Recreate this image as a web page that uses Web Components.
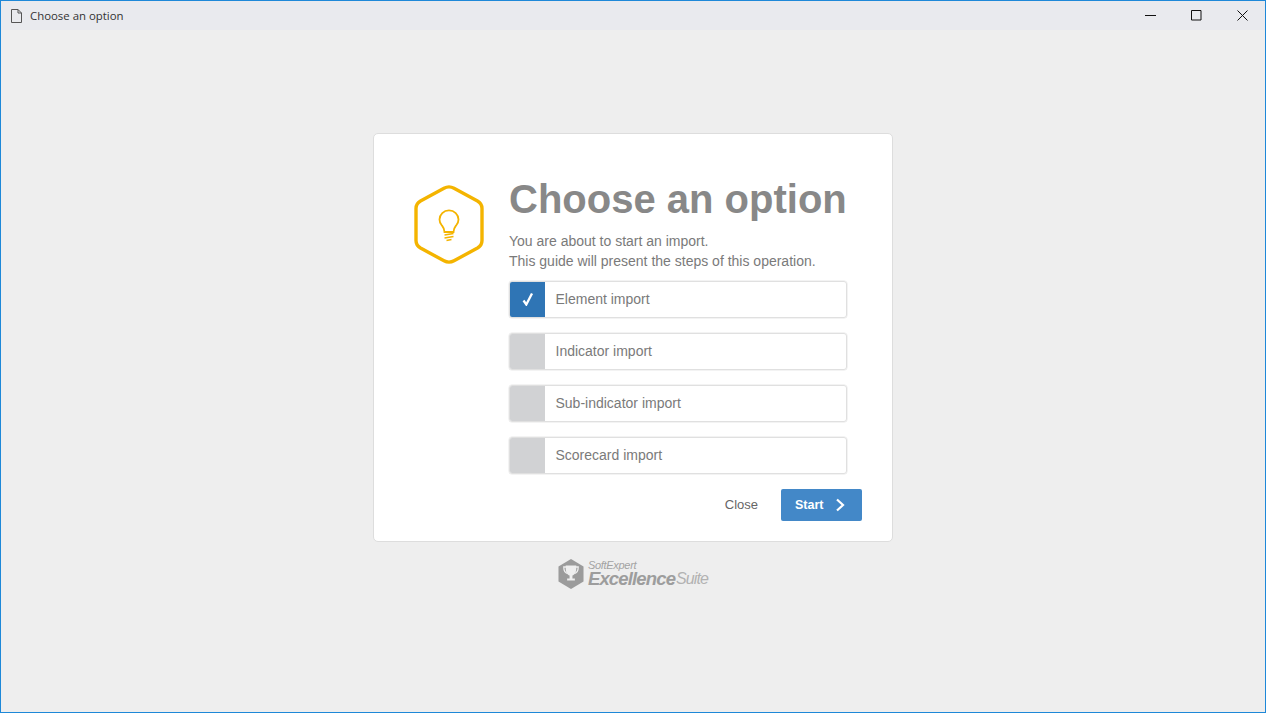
<!DOCTYPE html>
<html lang="en">
<head>
<meta charset="utf-8">
<title>Choose an option</title>
<style>
  html, body { margin: 0; height: 100%; }
  body { font-family: "Liberation Sans", Arial, sans-serif; }
</style>
</head>
<body>
<app-window caption="Choose an option">
  <wizard-card heading="Choose an option">
    <span slot="intro">You are about to start an import.<br>This guide will present the steps of this operation.</span>
    <option-row checked>Element import</option-row>
    <option-row>Indicator import</option-row>
    <option-row>Sub-indicator import</option-row>
    <option-row>Scorecard import</option-row>
  </wizard-card>
  <brand-logo></brand-logo>
</app-window>

<script>
class AppWindow extends HTMLElement {
  constructor() {
    super();
    this.attachShadow({ mode: "open" });
  }

  connectedCallback() {
    this.shadowRoot.innerHTML = /* html */`
    <style>
      :host {
        display: flex;
        flex-direction: column;
        box-sizing: border-box;
        height: 713px;
        border: 1px solid #1e88d8;
        background: #eeeeee;
      }
      .bar {
        display: flex;
        align-items: center;
        flex: none;
        height: 29px;
        padding-left: 10px;
        background: #e9eaee;
        font: 11.4px "Open Sans", "Noto Sans", sans-serif;
        color: #333;
      }
      .caption { margin-left: 8px; flex: 1; }
      .ctl { display: flex; width: 46px; height: 29px; align-items: center; justify-content: center; }
      .ctl svg { display: block; }
      main {
        flex: 1;
        display: flex;
        flex-direction: column;
        align-items: center;
        padding-top: 103px;
      }
    </style>
    <div class="bar">
      <svg width="11" height="14" viewBox="0 0 11 14" fill="none" stroke="#555" stroke-width="1">
        <path d="M.5 .5h6.5l3.5 3.5v9.500h-10z"/><path d="M7 .5v3.500h3.500"/>
      </svg>
      <span class="caption">${this.getAttribute("caption")}</span>
      <span class="ctl"><svg width="11" height="11" viewBox="0 0 11 11"><path d="M0 5.5h11" stroke="#111" fill="none"/></svg></span>
      <span class="ctl"><svg width="11" height="11" viewBox="0 0 11 11"><path d="M.5 .5h9.500v9.500h-9.500z" stroke="#111" fill="none"/></svg></span>
      <span class="ctl"><svg width="11" height="11" viewBox="0 0 11 11"><path d="M.5 .5l10 10M10.5 .5l-10 10" stroke="#111" fill="none"/></svg></span>
    </div>
    <main><slot></slot></main>`;
  }
}

class WizardCard extends HTMLElement {
  constructor() {
    super();
    this.attachShadow({ mode: "open" });
  }

  connectedCallback() {
    this.shadowRoot.innerHTML = /* html */`
    <style>
      :host {
        display: block;
        box-sizing: border-box;
        width: 520px;
        height: 409px;
        padding: 43px 30px 20px 40px;
        background: #fff;
        border: 1px solid #dddddd;
        border-radius: 5px;
      }
      .top { display: flex; }
      .mark { flex: none; width: 72px; height: 80px; margin: 8px 23px 0 0; }
      .mark svg { display: block; }
      .body { width: 338px; }
      h1 {
        margin: 0;
        font: bold 40px/44px "Liberation Sans", Arial, sans-serif;
        color: #888888;
        white-space: nowrap;
      }
      p {
        margin: 10px 0 10px;
        font-size: 14px;
        line-height: 20px;
        color: #7a7a7a;
      }
      .options { display: flex; flex-direction: column; gap: 15px; }
      .foot {
        display: flex;
        align-items: center;
        justify-content: flex-end;
        gap: 23px;
        margin-top: 15px;
      }
      .close { font-size: 13px; color: #666; padding-bottom: 2px; }
      .start {
        display: flex;
        align-items: center;
        box-sizing: border-box;
        width: 81px;
        height: 32px;
        padding-left: 14px;
        background: #4388c8;
        border-radius: 2px;
        color: #fff;
        font-size: 12.5px;
        font-weight: bold;
      }
      .start svg { margin-left: 12px; }
    </style>
    <div class="top">
      <div class="mark">
        <svg width="72" height="80" viewBox="0 0 72 80" fill="none" stroke="#f4b400">
          <path stroke-width="3.4" stroke-linejoin="round" d="M30 3.200q5-2.700 10 0L63.500 16q4.500 2.600 4.500 7.500v32q0 4.900-4.500 7.500L40 75.800q-5 2.700-10 0L6.500 63q-4.500-2.600-4.500-7.500v-32q0-4.900 4.500-7.500z"/>
          <path stroke-width="1.800" d="M30.500 47c0-3.500-1-4.500-2.800-6.800-1.400-1.700-2.200-3.700-2.200-5.700 0-5 4.200-9.200 9.500-9.200s9.500 4.200 9.500 9.200c0 2-.8 4-2.200 5.700-1.800 2.300-2.800 3.300-2.800 6.800z"/>
          <path stroke-width="1.400" d="M30.500 50l9-1.500M30.500 53l9-1.500M32.500 55.500l5-1"/>
        </svg>
      </div>
      <div class="body">
        <h1>${this.getAttribute("heading")}</h1>
        <p><slot name="intro"></slot></p>
        <div class="options"><slot></slot></div>
      </div>
    </div>
    <div class="foot">
      <span class="close">Close</span>
      <span class="start">Start
        <svg width="10" height="14" viewBox="0 0 10 14" fill="none" stroke="#fff" stroke-width="2.2"><path d="M2 1.500l6 5.500-6 5.500"/></svg>
      </span>
    </div>`;
  }
}

class OptionRow extends HTMLElement {
  constructor() {
    super();
    this.attachShadow({ mode: "open" });
  }

  connectedCallback() {
    const checked = this.hasAttribute("checked");
    this.shadowRoot.innerHTML = /* html */`
    <style>
      :host {
        display: flex;
        box-sizing: border-box;
        height: 37px;
        border: 1px solid #e0e0e0;
        border-radius: 3px;
        box-shadow: 0 0 0 .5px #e8e8e8;
        overflow: hidden;
        font-size: 14px;
        color: #7a7a7a;
      }
      .box {
        display: flex;
        align-items: center;
        justify-content: center;
        flex: none;
        width: 35px;
        background: ${checked ? "#2f75b5" : "#d1d2d4"};
      }
      .box svg { margin-left: 1px; }
      .label { display: flex; align-items: center; padding: 0 0 2px 10.5px; }
    </style>
    <span class="box">${checked ? `<svg width="12" height="13" viewBox="0 0 12 13" fill="none" stroke="#fff" stroke-width="2.3"><path d="M1.500 7.500l2.800 4 5.700-11"/></svg>` : ""}</span>
    <span class="label"><slot></slot></span>`;
  }
}

class BrandLogo extends HTMLElement {
  constructor() {
    super();
    this.attachShadow({ mode: "open" });
  }

  connectedCallback() {
    this.shadowRoot.innerHTML = /* html */`
    <style>
      :host {
        display: flex;
        align-items: center;
        gap: 4px;
        margin-top: 17px;
        color: #a3a3a3;
        font-family: "Liberation Sans", Arial, sans-serif;
        font-style: italic;
      }
      svg { display: block; }
      .words { display: flex; flex-direction: column; }
      .small { font-size: 11px; line-height: 10px; letter-spacing: -.3px; }
      .big { display: flex; font-size: 18.5px; line-height: 18px; font-weight: bold; letter-spacing: -.85px; color: #9d9d9d; white-space: nowrap; }
      .suite { font-weight: normal; font-size: 16px; color: #b2b2b2; letter-spacing: -.9px; margin-left: 1px; }
    </style>
    <svg width="26" height="30" viewBox="0 0 27 30" preserveAspectRatio="none">
      <path fill="#9b9b9b" d="M13.500 0l13 7.500v15l-13 7.500-13-7.500v-15z"/>
      <path fill="none" stroke="#eee" stroke-width="1.300" d="M8.500 8h-2.500c0 4 1.500 6 4 6.500M18.500 8h2.500c0 4-1.500 6-4 6.500"/>
      <path fill="#eee" d="M8 6.500h11v3c0 4-2 6.500-4 7v3h2.500v2h-8v-2h2.500v-3c-2-.5-4-3-4-7z"/>
    </svg>
    <div class="words">
      <span class="small">SoftExpert</span>
      <span class="big"><span>Excellence</span><span class="suite">Suite</span></span>
    </div>`;
  }
}

customElements.define("app-window", AppWindow);
customElements.define("wizard-card", WizardCard);
customElements.define("option-row", OptionRow);
customElements.define("brand-logo", BrandLogo);
</script>
</body>
</html>
